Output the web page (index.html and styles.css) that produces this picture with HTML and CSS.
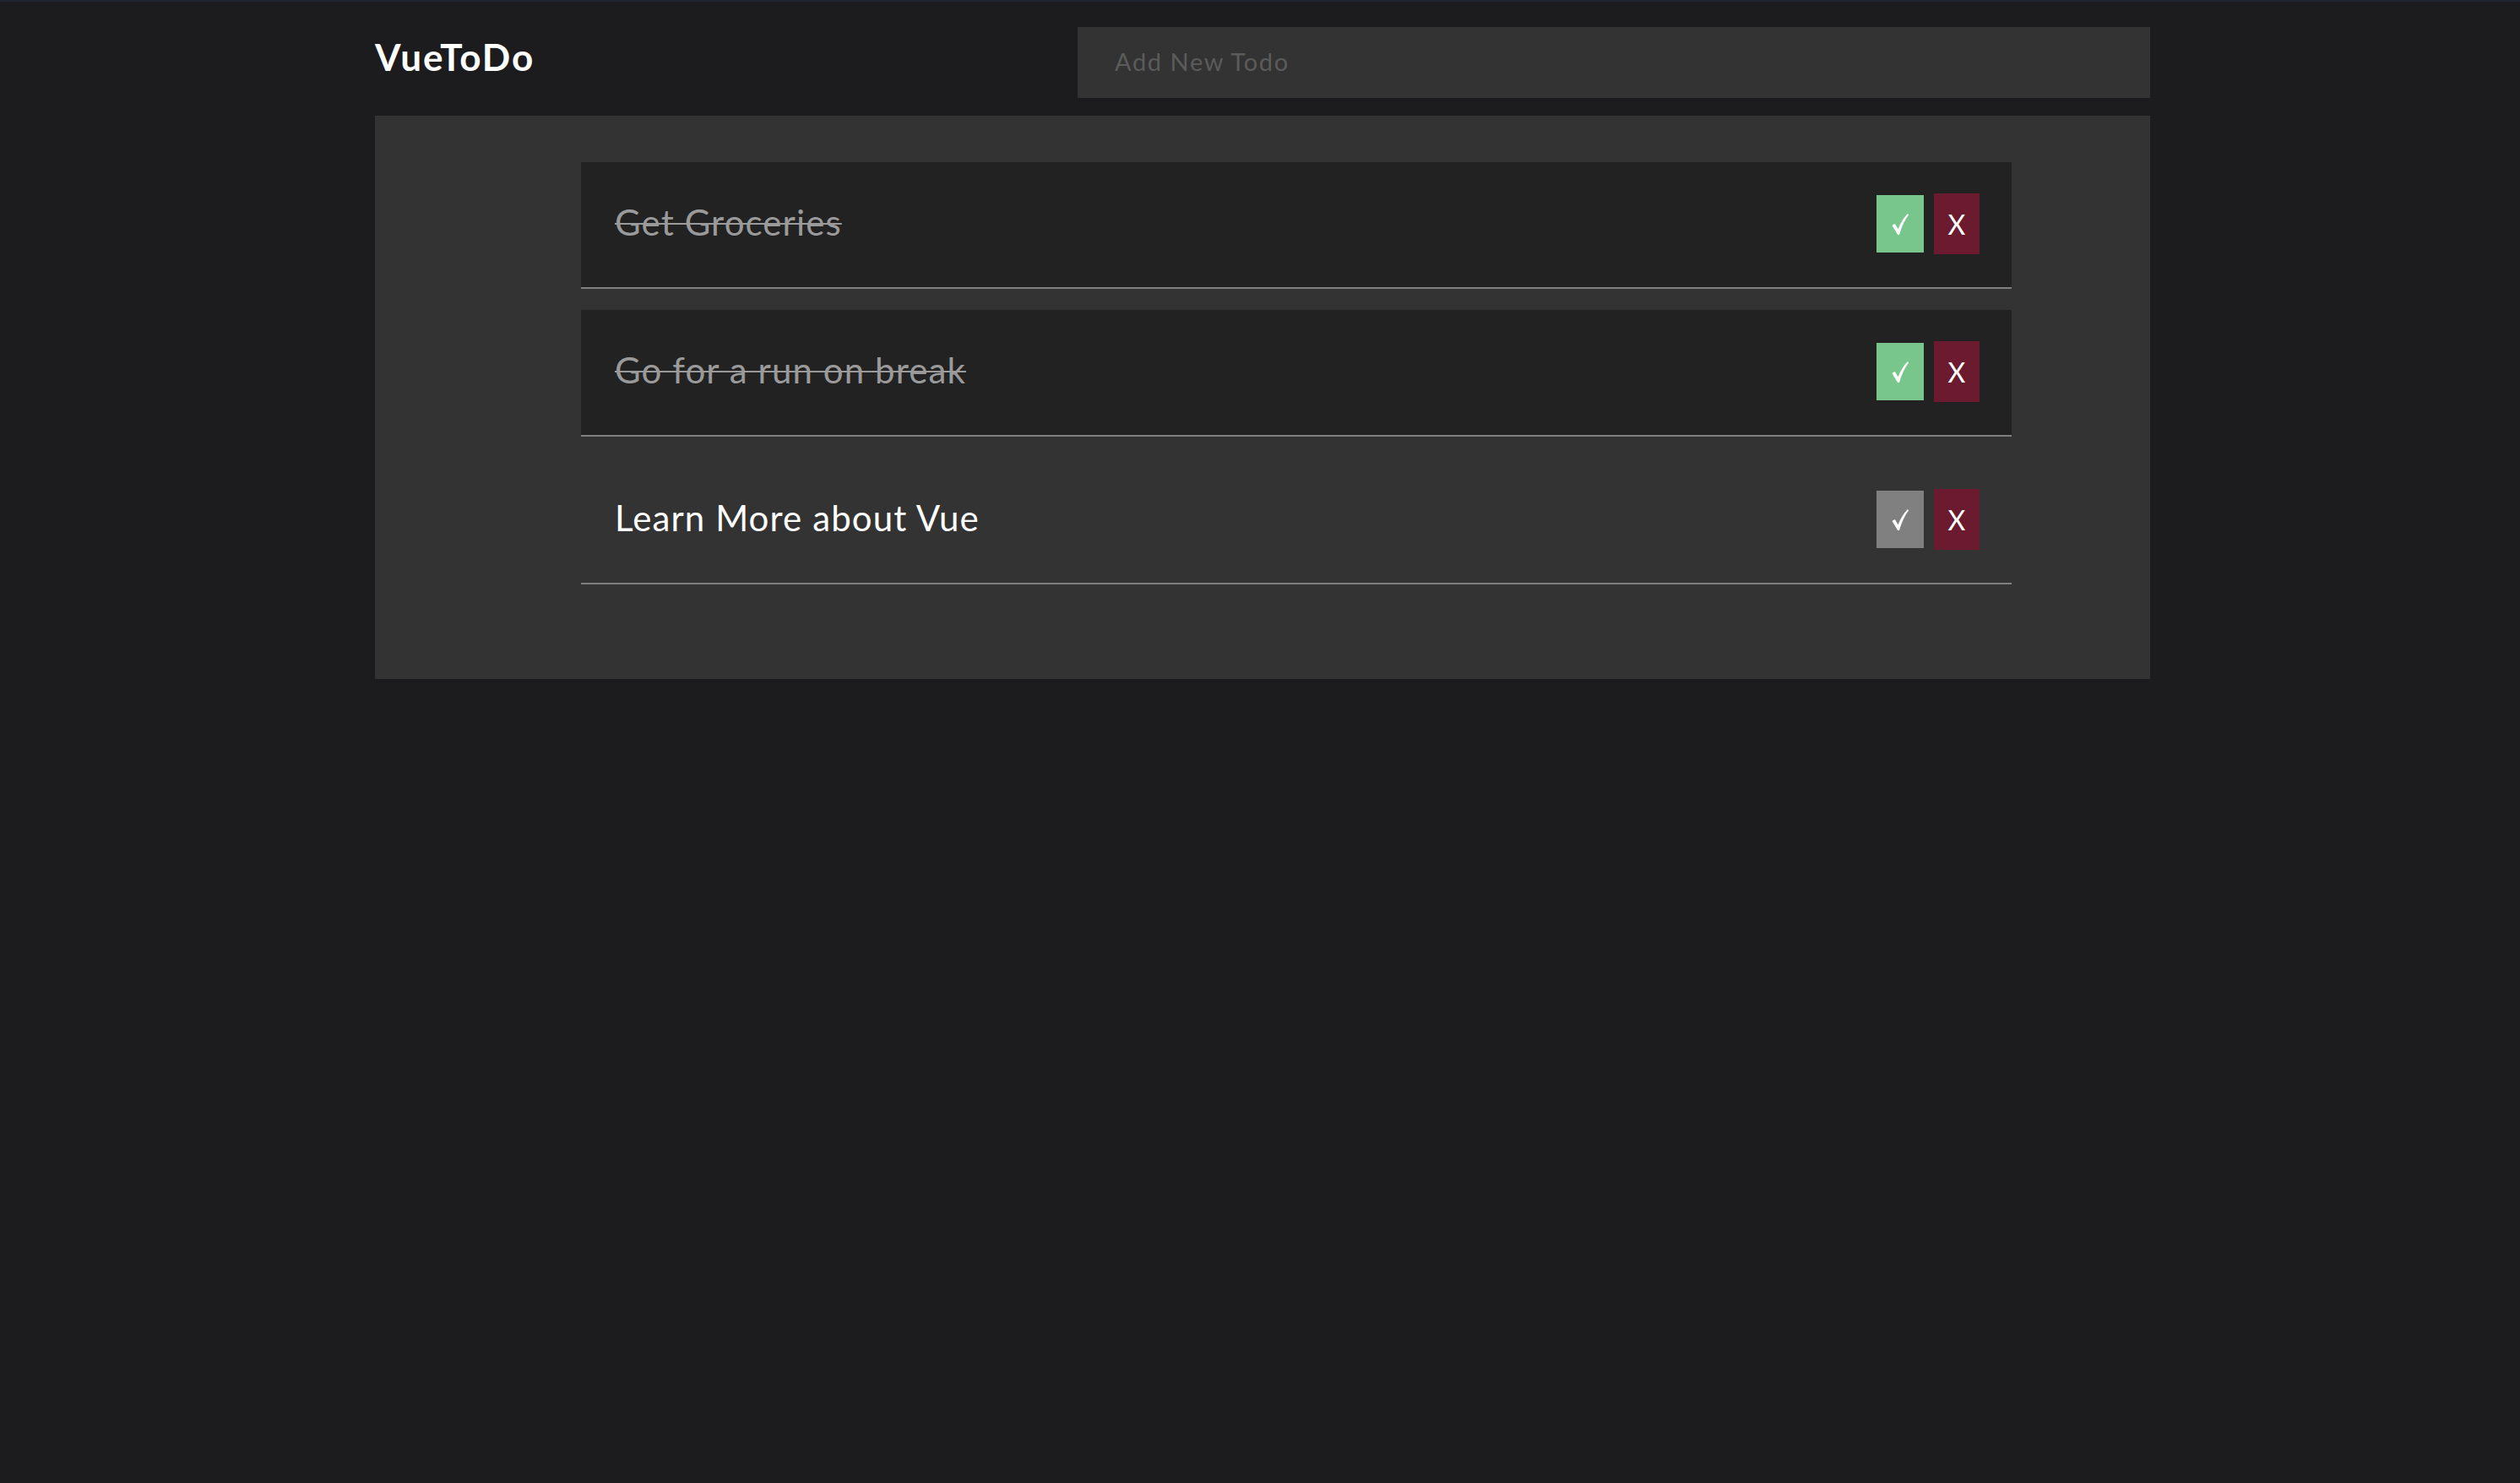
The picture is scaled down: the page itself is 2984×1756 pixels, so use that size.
FILE: index.html
```html
<!DOCTYPE html>
<html lang="en">
<head>
<meta charset="utf-8">
<title>VueToDo</title>
<link rel="stylesheet" href="styles.css">
</head>
<body>
<div class="topline"></div>
<div class="app">
  <header class="header">
    <h1 class="title">VueToDo</h1>
    <input class="new-todo" type="text" placeholder="Add New Todo">
  </header>
  <main class="panel">
    <ul class="todo-list">
      <li class="todo done">
        <span class="todo-text">Get Groceries</span>
        <div class="actions">
          <button class="btn btn-check" aria-label="Complete"><svg class="check-icon" viewBox="0 0 20 25"><path d="M0.5 14 Q2.5 12 4 12.3 L7.6 18.2 Q12 7 19 0 L20 1.6 Q13.5 10 9 25 L7.2 25 Z"/></svg></button>
          <button class="btn btn-delete">X</button>
        </div>
      </li>
      <li class="todo done">
        <span class="todo-text">Go for a run on break</span>
        <div class="actions">
          <button class="btn btn-check" aria-label="Complete"><svg class="check-icon" viewBox="0 0 20 25"><path d="M0.5 14 Q2.5 12 4 12.3 L7.6 18.2 Q12 7 19 0 L20 1.6 Q13.5 10 9 25 L7.2 25 Z"/></svg></button>
          <button class="btn btn-delete">X</button>
        </div>
      </li>
      <li class="todo">
        <span class="todo-text">Learn More about Vue</span>
        <div class="actions">
          <button class="btn btn-check" aria-label="Complete"><svg class="check-icon" viewBox="0 0 20 25"><path d="M0.5 14 Q2.5 12 4 12.3 L7.6 18.2 Q12 7 19 0 L20 1.6 Q13.5 10 9 25 L7.2 25 Z"/></svg></button>
          <button class="btn btn-delete">X</button>
        </div>
      </li>
    </ul>
  </main>
</div>
</body>
</html>
```
FILE: styles.css
```css
html, body {
  margin: 0;
  padding: 0;
}
body {
  background: #1c1c1e;
  font-family: "Lato", "Noto Sans", sans-serif;
  color: #ffffff;
  min-height: 1756px;
}
.topline {
  height: 2px;
  background: #1b2632;
}
.app {
  width: 2102px;
  margin-left: 444px;
}
.header {
  display: flex;
  justify-content: space-between;
  align-items: flex-start;
  padding-top: 30px;
}
.title {
  margin: 0;
  margin-top: 9px;
  font-size: 44px;
  line-height: 53px;
  font-weight: 700;
  letter-spacing: 1.9px;
  color: #ffffff;
}
.new-todo {
  width: 1270px;
  height: 84px;
  box-sizing: border-box;
  border: none;
  outline: none;
  background: #333333;
  padding: 0 0 3px 44px;
  font-family: "Lato", "Noto Sans", sans-serif;
  font-size: 29px;
  letter-spacing: 1.6px;
  color: #ffffff;
}
.new-todo::placeholder {
  color: #5b5b5b;
}
.panel {
  margin-top: 21px;
  background: #333333;
  padding: 55px 164px 87px 244px;
}
.todo-list {
  list-style: none;
  margin: 0;
  padding: 0;
}
.todo {
  display: flex;
  align-items: center;
  justify-content: space-between;
  height: 148px;
  border-bottom: 2px solid #808080;
  padding: 0 38px 0 40px;
  margin-bottom: 25px;
}
.todo.done {
  background: #222222;
}
.todo-text {
  font-size: 42px;
  letter-spacing: 1.1px;
  color: #ffffff;
  padding-bottom: 6px;
}
.todo.done .todo-text {
  color: #9a9a9a;
  text-decoration: line-through;
  text-decoration-thickness: 2px;
}
.actions {
  display: flex;
  align-items: center;
  gap: 12px;
  padding-bottom: 2px;
}
.btn {
  border: none;
  padding: 0;
  margin: 0;
  color: #ffffff;
  display: flex;
  align-items: center;
  justify-content: center;
}
.btn-check {
  width: 56px;
  height: 68px;
  background: #79c68c;
}
.check-icon {
  width: 20px;
  height: 25px;
  fill: #ffffff;
}
.todo:not(.done) .btn-check {
  background: #808080;
}
.btn-delete {
  width: 54px;
  height: 72px;
  background: #6b1a2f;
  font-family: "Lato", "Noto Sans", sans-serif;
  font-size: 32px;
}
```
